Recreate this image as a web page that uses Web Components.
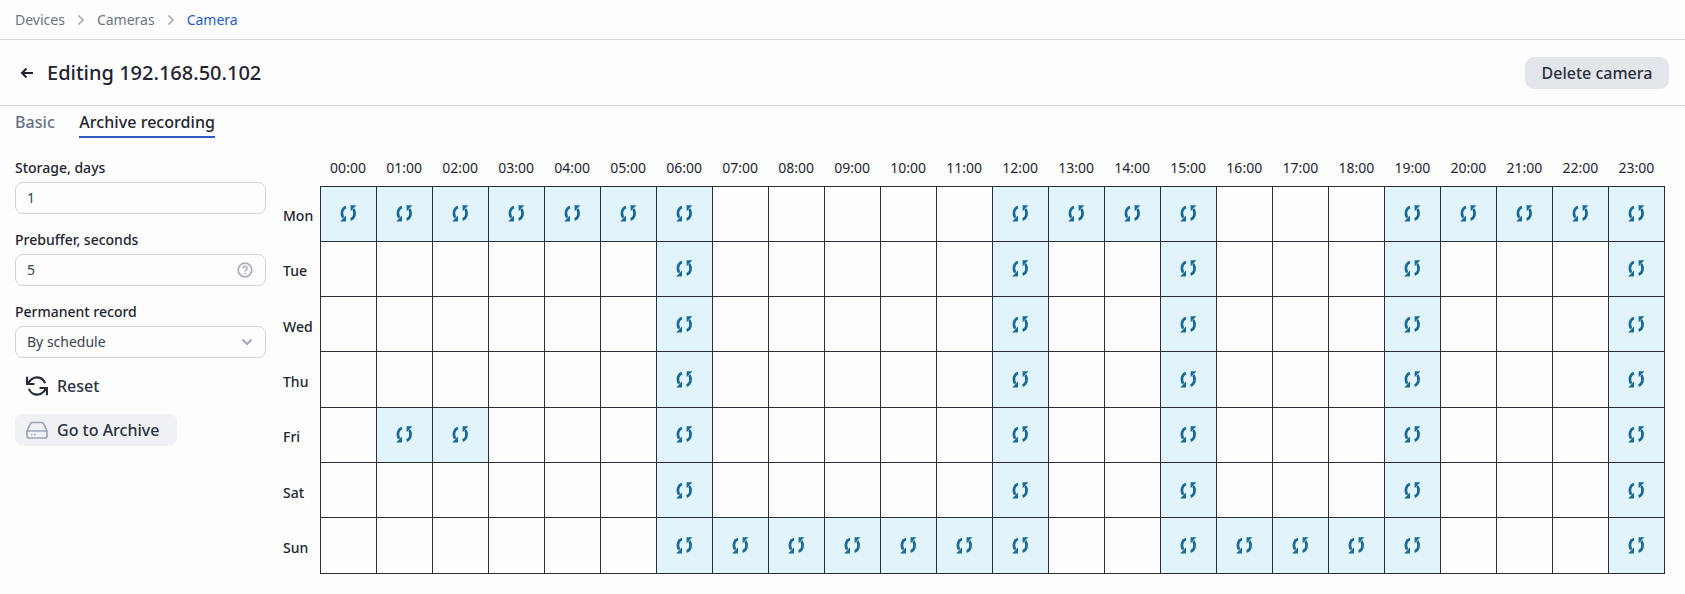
<!DOCTYPE html>
<html lang="en">
<head>
<meta charset="UTF-8">
<title>Camera</title>
<style>
  html, body { margin: 0; background: #fdfdfd; }
  body { font: 14px "Noto Sans", sans-serif; color: #1f2430; }
</style>
</head>
<body>
<cam-breadcrumbs></cam-breadcrumbs>
<cam-header heading="Editing 192.168.50.102"></cam-header>
<cam-tabs></cam-tabs>
<cam-page>
  <cam-sidebar slot="side"></cam-sidebar>
  <cam-schedule slot="main"></cam-schedule>
</cam-page>
<script>
  class CamBreadcrumbs extends HTMLElement {
    constructor() {
      super();
      this.attachShadow({ mode: 'open' });
      const chev = '<svg width="8" height="12" viewBox="0 0 8 12"><path d="M1.500 1.500 6 6l-4.500 4.500" fill="none" stroke="#a3aab7" stroke-width="1.700"/></svg>';
      this.shadowRoot.innerHTML = `
        <style>
          :host { display: flex; align-items: center; height: 39px; padding: 0 15px; gap: 12px;
                  border-bottom: 1px solid #d9dbe0; color: #6b7485; font-size: 14px; }
          .on { color: #2a5cc4; }
          svg { display: block; }
        </style>
        <span>Devices</span>${chev}<span>Cameras</span>${chev}<span class="on">Camera</span>`;
    }
  }
  class CamHeader extends HTMLElement {
    constructor() {
      super();
      this.attachShadow({ mode: 'open' });
      this.shadowRoot.innerHTML = `
        <style>
          :host { display: flex; align-items: center; height: 65px; padding: 0 16px 0 20px;
                  border-bottom: 1px solid #d9dbe0; }
          svg { display: block; margin-right: 13px; }
          h1 { margin: 0; flex: 1; font-size: 20px; font-weight: 500; color: #1f2430; }
          button { all: unset; height: 32px; width: 144px; text-align: center; line-height: 32px; background: #e2e5ea;
                   border-radius: 9px; font-size: 16px; font-weight: 500; color: #2b3140; }
        </style>
        <svg width="14" height="12" viewBox="0 0 14 12"><path d="M13 6H2M6.500 1.500 2 6l4.500 4.500" fill="none" stroke="#1f2430" stroke-width="2"/></svg>
        <h1></h1><button>Delete camera</button>`;
      this.shadowRoot.querySelector('h1').textContent = this.getAttribute('heading');
    }
  }
  class CamTabs extends HTMLElement {
    constructor() {
      super();
      this.attachShadow({ mode: 'open' });
      this.shadowRoot.innerHTML = `
        <style>
          :host { display: flex; gap: 24.500px; padding: 0 15px; height: 33px; font-size: 16px; font-weight: 500; letter-spacing: .05px; }
          span { line-height: 32px; height: 30px; color: #677084; }
          .on { color: #1f2430; border-bottom: 2px solid #2a5cc4; }
        </style>
        <span>Basic</span><span class="on">Archive recording</span>`;
    }
  }
  class CamPage extends HTMLElement {
    constructor() {
      super();
      this.attachShadow({ mode: 'open' });
      this.shadowRoot.innerHTML = `
        <style>
          :host { display: flex; padding: 0 20px 0 15px; gap: 17px; }
          ::slotted([slot=side]) { width: 251px; flex: none; }
        </style>
        <slot name="side"></slot><slot name="main"></slot>`;
    }
  }
  class CamField extends HTMLElement {
    constructor() {
      super();
      this.attachShadow({ mode: 'open' });
      this.shadowRoot.innerHTML = `
        <style>
          :host { display: block; margin-bottom: 16px; }
          label { display: block; height: 24px; line-height: 20px; font-size: 14px; font-weight: 500; color: #1f2430; }
          .box { display: flex; align-items: center; justify-content: space-between; height: 32px; box-sizing: border-box;
                 padding: 0 12px 0 11px; border: 1px solid #d0d5de; border-radius: 8px; font-size: 14px; color: #3a4152; }
          .box span { position: relative; top: -1px; }
          ::slotted(svg) { display: block; }
        </style>
        <label></label><div class="box"><span></span><slot></slot></div>`;
      this.shadowRoot.querySelector('label').textContent = this.getAttribute('label');
      this.shadowRoot.querySelector('span').textContent = this.getAttribute('value');
    }
  }
  class CamAction extends HTMLElement {
    constructor() {
      super();
      this.attachShadow({ mode: 'open' });
      this.shadowRoot.innerHTML = `
        <style>
          :host { display: inline-flex; align-items: center; gap: 9px; height: 32px; padding: 0 18px 0 11px;
                  border-radius: 8px; font-size: 16px; font-weight: 500; color: #2b3140; }
          :host([filled]) { background: #eff1f4; }
          ::slotted(svg) { display: block; }
        </style>
        <slot></slot>`;
    }
  }
  class CamSidebar extends HTMLElement {
    constructor() {
      super();
      this.attachShadow({ mode: 'open' });
      this.shadowRoot.innerHTML = `
        <style>
          :host { display: block; padding-top: 19px; }
          .acts { display: flex; flex-direction: column; align-items: flex-start; gap: 12px; margin-top: -4px; }
        </style>
        <cam-field label="Storage, days" value="1"></cam-field>
        <cam-field label="Prebuffer, seconds" value="5">
          <svg width="16" height="16" viewBox="0 0 16 16"><circle cx="8" cy="8" r="6.800" fill="none" stroke="#a8afbb" stroke-width="1.700"/><path d="M5.900 6.300a2.100 2.100 0 1 1 3.200 1.800c-.7.4-1.100.8-1.100 1.500" fill="none" stroke="#a8afbb" stroke-width="1.500"/><circle cx="8" cy="11.600" r=".9" fill="#a8afbb"/></svg>
        </cam-field>
        <cam-field label="Permanent record" value="By schedule">
          <svg width="12" height="8" viewBox="0 0 12 8"><path d="M1.500 1.500 6 6l4.500-4.500" fill="none" stroke="#a3aab7" stroke-width="2"/></svg>
        </cam-field>
        <div class="acts">
          <cam-action>
            <svg width="22" height="22" viewBox="0 0 24 24"><path d="M1.200 1.800v8h8M22.800 22.200v-8h-8M20.800 9A9.400 9.400 0 0 0 5.400 5.200L1.200 9.800M22.800 14.200l-4.200 4.600A9.400 9.400 0 0 1 3.200 15" fill="none" stroke="#262b36" stroke-width="2.300"/></svg>
            Reset
          </cam-action>
          <cam-action filled>
            <svg width="22" height="18" viewBox="0 0 22 18"><path d="M1 10 4.500 2.500A2 2 0 0 1 6.300 1.500h9.400a2 2 0 0 1 1.800 1L21 10v5a2 2 0 0 1-2 2H3a2 2 0 0 1-2-2zM1 10h20" fill="none" stroke="#9ea6b4" stroke-width="1.700"/><path d="M5 13.500h1.500M8 13.500h1.500" stroke="#9ea6b4" stroke-width="1.300"/></svg>
            Go to Archive
          </cam-action>
        </div>`;
    }
  }
  class CamSchedule extends HTMLElement {
    constructor() {
      super();
      this.attachShadow({ mode: 'open' });
      const half = '<path d="M6 2C2.300 3.200.6 8.400 3.200 12.600" fill="none" stroke="#1b6a93" stroke-width="2.700"/><path d="M.2 16.400h5.800V10.400z" fill="#1b6a93"/>';
      const icon = `<svg width="17" height="17" viewBox="0 0 17 17">${half}<g transform="rotate(180 8.300 8.300)">${half}</g></svg>`;
      const range = (a, b) => Array.from({ length: b - a + 1 }, (_, i) => a + i);
      const common = [6, 12, 15, 19, 23];
      const rows = [
        ['Mon', [...range(0, 6), ...range(12, 15), ...range(19, 23)]],
        ['Tue', common],
        ['Wed', common],
        ['Thu', common],
        ['Fri', [1, 2, ...common]],
        ['Sat', common],
        ['Sun', [...range(6, 12), ...range(15, 19), 23]],
      ];
      let html = '<tr><th></th>';
      for (let h = 0; h < 24; h++) html += `<th class="h">${String(h).padStart(2, '0')}:00</th>`;
      html += '</tr>';
      for (const [day, on] of rows) {
        html += `<tr><th class="d">${day}</th>`;
        for (let h = 0; h < 24; h++) html += on.includes(h) ? `<td class="on">${icon}</td>` : '<td></td>';
        html += '</tr>';
      }
      this.shadowRoot.innerHTML = `
        <style>
          :host { display: block; flex: 1; }
          table { border-collapse: collapse; table-layout: fixed; width: 1382px; font-size: 14px; }
          th { font-weight: 400; padding: 0; width: 56px; color: #1f2430; }
          th:first-child { width: 37px; }
          .h { height: 47px; vertical-align: bottom; padding-bottom: 9px; box-sizing: border-box; }
          .d { text-align: left; font-weight: 500; padding-top: 4px; }
          td { padding: 0; height: 54.300px; border: 1px solid #2a2e37; text-align: center; vertical-align: middle; }
          td.on { background: #e1f3fb; }
          td svg { display: block; margin: 0 auto; }
        </style>
        <table>${html}</table>`;
    }
  }
  customElements.define('cam-breadcrumbs', CamBreadcrumbs);
  customElements.define('cam-header', CamHeader);
  customElements.define('cam-tabs', CamTabs);
  customElements.define('cam-page', CamPage);
  customElements.define('cam-field', CamField);
  customElements.define('cam-action', CamAction);
  customElements.define('cam-sidebar', CamSidebar);
  customElements.define('cam-schedule', CamSchedule);
</script>
</body>
</html>
